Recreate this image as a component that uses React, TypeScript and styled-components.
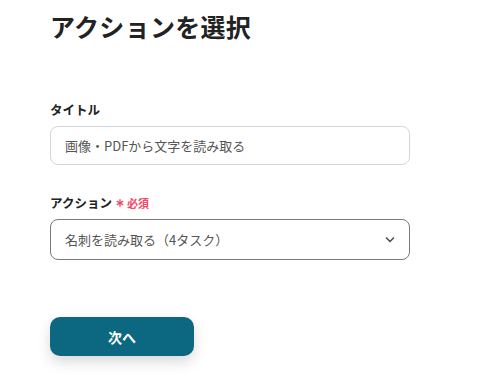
import React from "react";
import styled, { createGlobalStyle } from "styled-components";

const Global = createGlobalStyle`
  html, body { margin: 0; padding: 0; background: #fff; }
  body { font-family: "Noto Sans CJK JP", "Noto Sans", sans-serif; color: #222; }
  * { box-sizing: border-box; }
`;

const Page = styled.div`
  width: 479px;
  height: 381px;
  padding: 8px 0 0 50px;
  display: flex;
  flex-direction: column;
`;

const Title = styled.h1`
  margin: 0;
  font-size: 25px;
  font-weight: 700;
  line-height: 36px;
  color: #222;
  letter-spacing: 0.3px;
`;

const Field = styled.div<{ $top: number }>`
  margin-top: ${(p) => p.$top}px;
  display: flex;
  flex-direction: column;
  gap: 7px;
`;

const Label = styled.div`
  display: flex;
  align-items: center;
  gap: 4px;
  font-size: 12.5px;
  font-weight: 700;
  line-height: 18px;
  color: #222;
`;

const Required = styled.span`
  color: #ee4a68;
  font-size: 11px;
  font-weight: 700;
  display: flex;
  align-items: center;
  gap: 3px;
`;

const Input = styled.div`
  width: 360px;
  height: 39px;
  border: 1px solid #d3d6db;
  border-radius: 8px;
  display: flex;
  align-items: center;
  padding: 0 14px;
  font-size: 13px;
  color: #555;
`;

const Select = styled(Input)`
  height: 41px;
  border-color: #7a7a7a;
  justify-content: space-between;
  padding-right: 14px;
`;

const Button = styled.button`
  margin-top: 57px;
  width: 144px;
  height: 39px;
  border: none;
  border-radius: 10px;
  background: #0b6880;
  color: #fff;
  font-family: inherit;
  font-size: 14px;
  font-weight: 700;
  box-shadow: 0 6px 14px rgba(0, 0, 0, 0.15);
  cursor: pointer;
`;

const Asterisk = () => (
  <svg width="8" height="8" viewBox="0 0 8 8">
    <g stroke="#ee4a68" strokeWidth="1.4" strokeLinecap="round">
      <line x1="4" y1="0.8" x2="4" y2="7.2" />
      <line x1="1.2" y1="2.4" x2="6.8" y2="5.6" />
      <line x1="1.2" y1="5.6" x2="6.8" y2="2.4" />
    </g>
  </svg>
);

export default function App() {
  return (
    <>
      <Global />
      <Page>
        <Title>アクションを選択</Title>
        <Field $top={57}>
          <Label>タイトル</Label>
          <Input>画像・PDFから文字を読み取る</Input>
        </Field>
        <Field $top={29}>
          <Label>
            アクション
            <Required>
              <Asterisk />
              必須
            </Required>
          </Label>
          <Select>
            名刺を読み取る（4タスク）
            <svg width="10" height="8" viewBox="0 0 10 8">
              <path d="M1.5 2 L5 5.5 L8.5 2" fill="none" stroke="#555" strokeWidth="1.7" strokeLinecap="round" strokeLinejoin="round" />
            </svg>
          </Select>
        </Field>
        <Button>次へ</Button>
      </Page>
    </>
  );
}
